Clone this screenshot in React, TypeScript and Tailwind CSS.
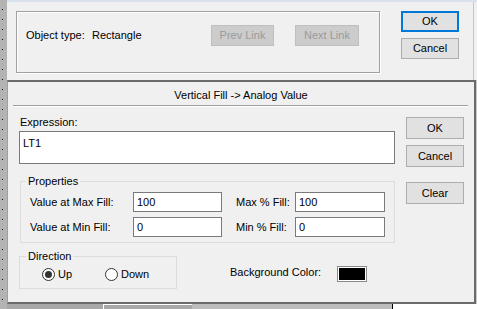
import { useState } from "react";

const font = { fontFamily: '"Liberation Sans", Arial, sans-serif' };

function WinButton({ label, focused, disabled, className }: { label: string; focused?: boolean; disabled?: boolean; className?: string }) {
    let look = "bg-[#e1e1e1] border border-[#adadad] text-black";
    if (focused) look = "bg-[#e1e1e1] border-2 border-[#0078d7] text-black";
    if (disabled) look = "bg-[#cccccc] border border-[#bfbfbf] text-[#9a9a9a]";
    return (
        <button type="button" className={`flex items-center justify-center leading-[13px] ${look} ${className ?? ""}`}>
            {label}
        </button>
    );
}

function Radio({ label, checked, onClick }: { label: string; checked: boolean; onClick: () => void }) {
    return (
        <div className="flex items-center cursor-default" onClick={onClick}>
            <span className="w-[13px] h-[13px] rounded-full border border-[#333] bg-white flex items-center justify-center">
                {checked && <span className="w-[7px] h-[7px] rounded-full bg-[#333]" />}
            </span>
            <span className="ml-[3px] leading-[13px]">{label}</span>
        </div>
    );
}

function TextBox({ value, className }: { value: string; className?: string }) {
    return (
        <input
            defaultValue={value}
            className={`border border-[#7a7a7a] bg-white px-[3px] leading-[13px] outline-none ${className ?? ""}`}
        />
    );
}

export default function App() {
    const [dir, setDir] = useState<"up" | "down">("up");
    const dots = Array.from({ length: 30 });

    return (
        <div className="w-[477px] h-[309px] flex overflow-hidden bg-[#f0f0f0] text-[11px] text-black" style={font}>
            {/* canvas strip on the left */}
            <div className="w-[7px] shrink-0 bg-[#b3b3b3] flex flex-col pl-[2px] pt-[9px] gap-[9px]">
                {dots.map((_, i) => (
                    <span key={i} className="w-[1px] h-[1px] bg-black" />
                ))}
            </div>

            <div className="flex-1 flex flex-col">
                <div className="h-[2px] bg-[#d8e1ec]" />

                {/* link dialog behind */}
                <div className="h-[78px] flex">
                    <div className="flex-1 flex pl-[9px] pt-[9px] border-r border-[#c6c6c6]">
                        <div className="w-[364px] h-[62px] border border-[#a0a0a0] shadow-[inset_1px_1px_0_#fff,1px_1px_0_#fff] flex items-start pt-[13px] pl-[9px] pr-[20px]">
                            <span className="w-[66px] mt-[4px] leading-[13px]">Object type:</span>
                            <span className="mt-[4px] leading-[13px]">Rectangle</span>
                            <div className="ml-auto flex gap-[21px]">
                                <WinButton label="Prev Link" disabled className="w-[63px] h-[21px]" />
                                <WinButton label="Next Link" disabled className="w-[64px] h-[21px]" />
                            </div>
                        </div>
                        <div className="ml-[21px] flex flex-col">
                            <WinButton label="OK" focused className="w-[58px] h-[21px]" />
                            <WinButton label="Cancel" className="w-[58px] h-[21px] mt-[6px]" />
                        </div>
                    </div>
                    <div className="w-[3px]" />
                </div>

                {/* fill dialog */}
                <div className="h-[224px] flex">
                    <div className="flex-1 flex flex-col border-t-2 border-b-2 border-r-2 border-l border-t-[#6b6b6b] border-b-[#6b6b6b] border-r-[#6b6b6b] border-l-[#a0a0a0]">
                        <div className="mt-[7px] leading-[13px] text-center">Vertical Fill -&gt; Analog Value</div>
                        <div className="mt-[3px] ml-[5px] mr-[6px] h-[2px] border-t border-[#a0a0a0] border-b border-b-white" />

                        <div className="flex pl-[11px]">
                            <div className="w-[376px] flex flex-col">
                                <div className="mt-[9px] ml-[1px] leading-[13px]">Expression:</div>
                                <div className="mt-[2px] h-[33px] border border-[#7a7a7a] bg-white px-[3px] pt-[5px] leading-[13px]">LT1</div>

                                <fieldset className="mt-[11px] ml-[1px] w-[375px] border border-[#dcdcdc]">
                                    <legend className="ml-[5px] px-[2px] leading-[13px]">Properties</legend>
                                    <div className="grid grid-cols-[103px_89px_14px_59px_90px] gap-y-[5px] items-center pl-[9px] pt-[4px] pb-[5px]">
                                        <span>Value at Max Fill:</span>
                                        <TextBox value="100" className="h-[20px]" />
                                        <span />
                                        <span>Max % Fill:</span>
                                        <TextBox value="100" className="h-[20px]" />
                                        <span>Value at Min Fill:</span>
                                        <TextBox value="0" className="h-[20px]" />
                                        <span />
                                        <span>Min % Fill:</span>
                                        <TextBox value="0" className="h-[20px]" />
                                    </div>
                                </fieldset>

                                <div className="flex items-start mt-[7px]">
                                    <fieldset className="w-[158px] border border-[#dcdcdc]">
                                        <legend className="ml-[6px] px-[2px] leading-[13px]">Direction</legend>
                                        <div className="flex pl-[22px] pt-[5px] pb-[7px]">
                                            <div className="w-[63px]">
                                                <Radio label="Up" checked={dir === "up"} onClick={() => setDir("up")} />
                                            </div>
                                            <Radio label="Down" checked={dir === "down"} onClick={() => setDir("down")} />
                                        </div>
                                    </fieldset>
                                    <span className="ml-[53px] mt-[16px] leading-[13px]">Background Color:</span>
                                    <div className="ml-auto mr-[28px] mt-[16px] w-[30px] h-[16px] border border-[#888] bg-white p-[1px]">
                                        <div className="w-full h-full bg-black" />
                                    </div>
                                </div>
                            </div>

                            <div className="ml-[11px] flex flex-col">
                                <WinButton label="OK" className="mt-[10px] w-[58px] h-[22px]" />
                                <WinButton label="Cancel" className="mt-[6px] w-[58px] h-[22px]" />
                                <WinButton label="Clear" className="mt-[15px] w-[58px] h-[22px]" />
                            </div>
                        </div>
                    </div>
                    <div className="w-[1px] bg-[#c8c8c8]" />
                </div>

                {/* whatever sits under the dialog */}
                <div className="flex-1 flex">
                    <div className="w-[96px] bg-[#a8a8a8]" />
                    <div className="w-[89px] bg-[#a8a8a8] border-t border-l border-white" />
                    <div className="w-[200px] bg-[#bdbdbd]" />
                    <div className="w-[1px] bg-black" />
                    <div className="flex-1 bg-white" />
                </div>
            </div>
        </div>
    );
}
